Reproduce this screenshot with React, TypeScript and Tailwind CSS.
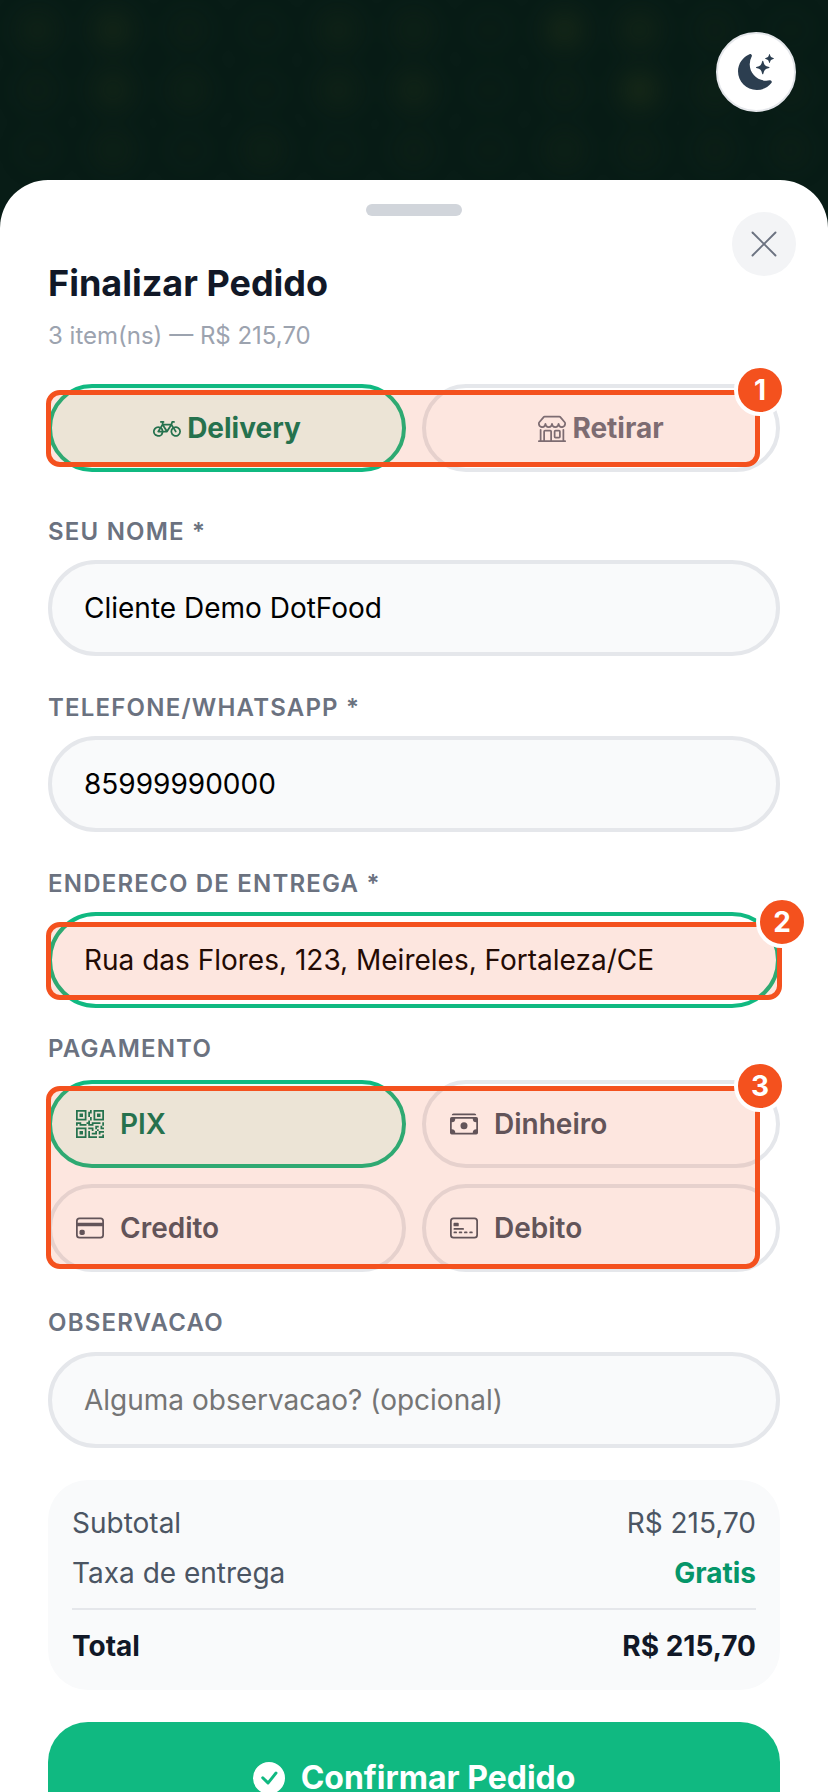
import type { ReactNode } from 'react';
import { X } from 'lucide-react';
import {
  BsBicycle,
  BsShop,
  BsQrCode,
  BsCashStack,
  BsCreditCard,
  BsCreditCard2Front,
  BsCheckCircleFill,
  BsMoonStarsFill,
} from 'react-icons/bs';

const blobs = [
  'opacity-40', 'opacity-60', 'opacity-20', 'opacity-10', 'opacity-40', 'opacity-30', 'opacity-10', 'opacity-70', 'opacity-50', 'opacity-20', 'opacity-10',
  'opacity-20', 'opacity-50', 'opacity-30', 'opacity-10', 'opacity-40', 'opacity-50', 'opacity-10', 'opacity-20', 'opacity-80', 'opacity-30', 'opacity-20',
  'opacity-10', 'opacity-30', 'opacity-10', 'opacity-30', 'opacity-10', 'opacity-20', 'opacity-10', 'opacity-30', 'opacity-20', 'opacity-20', 'opacity-20',
];

const payments = [
  { label: 'PIX', icon: BsQrCode, active: true },
  { label: 'Dinheiro', icon: BsCashStack, active: false },
  { label: 'Credito', icon: BsCreditCard, active: false },
  { label: 'Debito', icon: BsCreditCard2Front, active: false },
];

function Label({ children, className = 'mb-3' }: { children: ReactNode; className?: string }) {
  return (
    <label className={`block text-[24px] leading-[32px] font-semibold tracking-[1.2px] text-[#6b7280] uppercase ${className}`}>
      {children}
    </label>
  );
}

function Marker({ n, className }: { n: number; className: string }) {
  return (
    <div className={`pointer-events-none absolute rounded-[14px] border-[5px] border-[#f4511e] bg-[rgba(244,81,30,0.14)] ${className}`}>
      <span className="absolute -top-[31px] -right-[31px] flex h-[52px] w-[52px] items-center justify-center rounded-full border-4 border-white bg-[#f4511e] text-[28px] font-bold text-white">
        {n}
      </span>
    </div>
  );
}

export default function App() {
  return (
    <div className="relative h-[1792px] w-[828px] overflow-hidden bg-[#081c16] font-['Inter',sans-serif]">
      <div className="absolute inset-x-0 top-0 grid h-[180px] grid-cols-11 grid-rows-3 blur-[10px]">
        {blobs.map((o, i) => (
          <div key={i} className={`bg-[radial-gradient(circle,#1f2f18_0%,transparent_60%)] ${o}`} />
        ))}
      </div>

      <button className="absolute top-8 right-8 flex h-20 w-20 items-center justify-center rounded-full border-2 border-[#e5e7eb] bg-white text-[#2c3e50]">
        <BsMoonStarsFill size={36} />
      </button>

      <div className="relative mt-[180px] rounded-t-[48px] bg-white px-12 pt-6">
        <div className="mx-auto h-3 w-24 rounded-full bg-[#d1d5db]" />
        <button className="absolute top-8 right-8 flex h-16 w-16 items-center justify-center rounded-full bg-[#f3f4f6] text-[#6b7280]">
          <X size={46} strokeWidth={1} />
        </button>

        <h2 className="mt-[45px] text-[36px] leading-[44px] font-bold text-[#111827]">Finalizar Pedido</h2>
        <p className="mt-[15px] text-[24px] leading-[32px] text-[#9ca3af]">3 item(ns) — R$ 215,70</p>

        <div className="relative mt-[32px] grid grid-cols-2 gap-4">
          <button className="flex h-[88px] items-center justify-center gap-[6px] rounded-full border-4 border-[#10b981] bg-[#ecfdf5] text-[28px] font-bold text-[#047857]">
            <BsBicycle size={28} />
            Delivery
          </button>
          <button className="flex h-[88px] items-center justify-center gap-[6px] rounded-full border-4 border-[#e5e7eb] bg-white text-[28px] font-bold text-[#6b7280]">
            <BsShop size={28} />
            Retirar
          </button>
          <Marker n={1} className="top-[6px] -left-[2px] h-[77px] w-[714px]" />
        </div>

        <div className="mt-[44px]">
          <Label>Seu nome *</Label>
          <input readOnly value="Cliente Demo DotFood" className="h-[96px] w-full rounded-full border-4 border-[#e5e7eb] bg-[#f9fafb] px-8 text-[28px] text-black outline-none" />
        </div>

        <div className="mt-[36px]">
          <Label>Telefone/WhatsApp *</Label>
          <input readOnly value="85999990000" className="h-[96px] w-full rounded-full border-4 border-[#e5e7eb] bg-[#f9fafb] px-8 text-[28px] text-black outline-none" />
        </div>

        <div className="mt-[36px]">
          <Label>Endereco de entrega *</Label>
          <div className="relative">
            <input readOnly value="Rua das Flores, 123, Meireles, Fortaleza/CE" className="h-[96px] w-full rounded-full border-4 border-[#10b981] bg-white px-8 text-[28px] text-black outline-none" />
            <Marker n={2} className="top-[10px] -left-[2px] h-[78px] w-[736px]" />
          </div>
        </div>

        <div className="mt-[25px]">
          <Label className="mb-[15px]">Pagamento</Label>
          <div className="relative grid grid-cols-2 gap-4">
            {payments.map((p) => (
              <button
                key={p.label}
                className={`flex h-[88px] items-center gap-4 rounded-full border-4 pl-6 text-[28px] font-semibold ${
                  p.active ? 'border-[#10b981] bg-[#ecfdf5] text-[#047857]' : 'border-[#e5e7eb] bg-white text-[#4b5563]'
                }`}
              >
                <p.icon size={28} />
                {p.label}
              </button>
            ))}
            <Marker n={3} className="top-[6px] -left-[2px] h-[183px] w-[714px]" />
          </div>
        </div>

        <div className="mt-[35px]">
          <Label className="mb-[13px]">Observacao</Label>
          <input readOnly placeholder="Alguma observacao? (opcional)" className="h-[96px] w-full rounded-full border-4 border-[#e5e7eb] bg-[#f9fafb] px-8 text-[28px] text-black outline-none placeholder:text-[#757575]" />
        </div>

        <div className="mt-[32px] rounded-[40px] bg-[#f9fafb] px-6 pt-6 pb-[25px]">
          <div className="flex justify-between text-[28px] leading-[38px] text-[#4b5563]">
            <span>Subtotal</span>
            <span>R$ 215,70</span>
          </div>
          <div className="mt-[12px] flex justify-between text-[28px] leading-[38px] text-[#4b5563]">
            <span>Taxa de entrega</span>
            <span className="font-bold text-[#059669]">Gratis</span>
          </div>
          <div className="mt-[16px] h-[2px] bg-[#e5e7eb]" />
          <div className="mt-[17px] flex justify-between text-[28px] leading-[38px] font-bold text-[#111827]">
            <span>Total</span>
            <span>R$ 215,70</span>
          </div>
        </div>

        <button className="mt-8 flex h-[112px] w-full items-center justify-center gap-4 rounded-[40px] bg-[#10b981] text-[32px] font-bold text-white">
          <BsCheckCircleFill size={32} />
          Confirmar Pedido
        </button>
      </div>
    </div>
  );
}
